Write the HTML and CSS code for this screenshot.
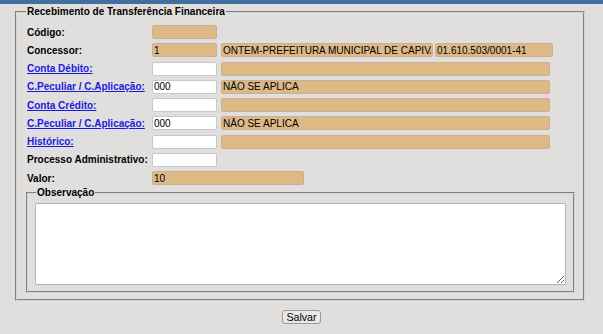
FILE: index.html
```html
<!DOCTYPE html>
<html lang="pt-BR">
<head>
    <meta charset="UTF-8">
    <title>Recebimento de Transferência Financeira</title>
    <link rel="stylesheet" href="styles.css">
</head>
<body>
    <div class="topbar"></div>
    <form class="form">
        <fieldset class="main">
            <legend>Recebimento de Transferência Financeira</legend>
            <div class="rows">
                <label>Código:</label>
                <div class="fields"><input type="text" class="ro short" readonly></div>

                <label>Concessor:</label>
                <div class="fields">
                    <input type="text" class="ro short" value="1" readonly>
                    <input type="text" class="ro name" value="ONTEM-PREFEITURA MUNICIPAL DE CAPIVARI" readonly>
                    <input type="text" class="ro doc" value="01.610.503/0001-41" readonly>
                </div>

                <label><a href="#">Conta Débito:</a></label>
                <div class="fields">
                    <input type="text" class="short">
                    <input type="text" class="ro wide" readonly>
                </div>

                <label><a href="#">C.Peculiar / C.Aplicação:</a></label>
                <div class="fields">
                    <input type="text" class="short" value="000">
                    <input type="text" class="ro wide" value="NÃO SE APLICA" readonly>
                </div>

                <label><a href="#">Conta Crédito:</a></label>
                <div class="fields">
                    <input type="text" class="short">
                    <input type="text" class="ro wide" readonly>
                </div>

                <label><a href="#">C.Peculiar / C.Aplicação:</a></label>
                <div class="fields">
                    <input type="text" class="short" value="000">
                    <input type="text" class="ro wide" value="NÃO SE APLICA" readonly>
                </div>

                <label><a href="#">Histórico:</a></label>
                <div class="fields">
                    <input type="text" class="short">
                    <input type="text" class="ro wide" readonly>
                </div>

                <label>Processo Administrativo:</label>
                <div class="fields"><input type="text" class="short"></div>

                <label>Valor:</label>
                <div class="fields"><input type="text" class="ro value" value="10" readonly></div>
            </div>

            <fieldset class="obs">
                <legend>Observação</legend>
                <textarea></textarea>
            </fieldset>
        </fieldset>

        <div class="actions">
            <button type="button">Salvar</button>
        </div>
    </form>
</body>
</html>
```

FILE: styles.css
```css
body {
    margin: 0;
    background-color: #e0dfdd;
    font-family: "Liberation Sans", Arial, sans-serif;
    font-size: 10px;
    color: #000;
}

.topbar {
    height: 4px;
    background-color: #41709f;
}

.form {
    margin: 1px 18px 0 15px;
}

fieldset {
    border: 2px groove #d4d4d4;
    margin: 0;
}

legend {
    font-weight: bold;
    font-size: 10px;
    line-height: 13px;
    padding: 0 1px;
}

.main {
    padding: 7px 8px 6px 9px;
}

.rows {
    display: grid;
    grid-template-columns: 126px 1fr;
    row-gap: 4.25px;
    align-items: center;
}

.rows label {
    font-weight: bold;
    padding-left: 1px;
}

.rows a {
    color: #1a1ae0;
}

.fields {
    display: flex;
    gap: 4px;
    height: 14px;
}

input {
    box-sizing: border-box;
    height: 14px;
    margin: 0;
    padding: 0 1px;
    font-family: "Liberation Sans", Arial, sans-serif;
    font-size: 10px;
    border: 1px solid #c8c8c8;
    border-radius: 2px;
    background-color: #fff;
    outline: none;
}

input.ro {
    background-color: #deb887;
    border-color: #c9b08e;
}

.short {
    width: 65px;
}

.wide {
    width: 329px;
}

.name {
    width: 212px;
}

.doc {
    width: 118px;
    margin-left: -2px;
}

.value {
    width: 152px;
}

.obs {
    margin-top: 1px;
    padding: 4px 7px 6px 7px;
}

.obs legend {
    margin-left: 1px;
}

textarea {
    display: block;
    box-sizing: border-box;
    width: 100%;
    height: 82px;
    margin: 0;
    border: 1px solid #b5b5b5;
    border-radius: 2px;
    background-color: #fff;
}

.actions {
    text-align: center;
    padding-top: 9px;
    margin-left: -15px;
    margin-right: -18px;
}

button {
    font-family: "Liberation Sans", Arial, sans-serif;
    font-size: 10.67px;
    line-height: 12px;
    padding: 0 3px;
    border: 1px solid #9a9a9a;
    border-radius: 3px;
    background-color: #e9e9e9;
    color: #000;
}
```
